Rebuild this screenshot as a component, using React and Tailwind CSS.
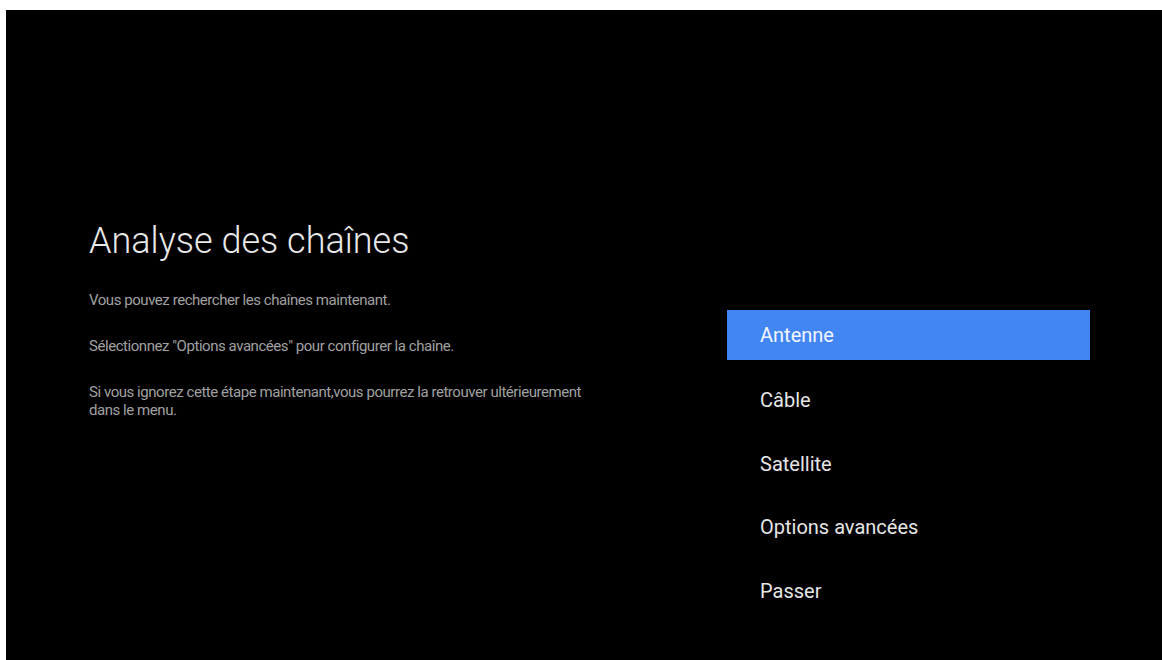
export default function App() {
  const items = ["Antenne", "Câble", "Satellite", "Options avancées", "Passer"];
  return (
    <div className="w-[1162px] h-[660px] bg-white pt-[10px] pl-[6px] overflow-hidden" style={{ fontFamily: "Roboto, 'Noto Sans', sans-serif" }}>
      <div className="w-full h-[650px] bg-black flex">
        <div className="w-[620px] pl-[83px] pt-[209px]">
          <h1 className="text-[36px] leading-[44px] font-light text-[#e8e8e8]">Analyse des chaînes</h1>
          <div className="mt-[28px] text-[15px] leading-[18px] tracking-[-0.45px] text-[#a0a0a0] w-[510px]">
            <p>Vous pouvez rechercher les chaînes maintenant.</p>
            <p className="mt-[28px]">Sélectionnez "Options avancées" pour configurer la chaîne.</p>
            <p className="mt-[28px]">Si vous ignorez cette étape maintenant,vous pourrez la retrouver ultérieurement dans le menu.</p>
          </div>
        </div>
        <div className="ml-[101px] pt-[300px] w-[363px]">
          {items.map((it, i) => (
            <div
              key={it}
              className={
                i === 0
                  ? "h-[50px] mb-[13.8px] flex items-center pl-[33px] bg-[#4286f4] text-[20px] text-[#f2f6ff]"
                  : "h-[50px] mb-[13.8px] flex items-center pl-[33px] text-[20px] text-[#e6e6e6]"
              }
            >
              <span className={i === 0 ? "" : "translate-y-[1px]"}>{it}</span>
            </div>
          ))}
        </div>
      </div>
    </div>
  );
}
